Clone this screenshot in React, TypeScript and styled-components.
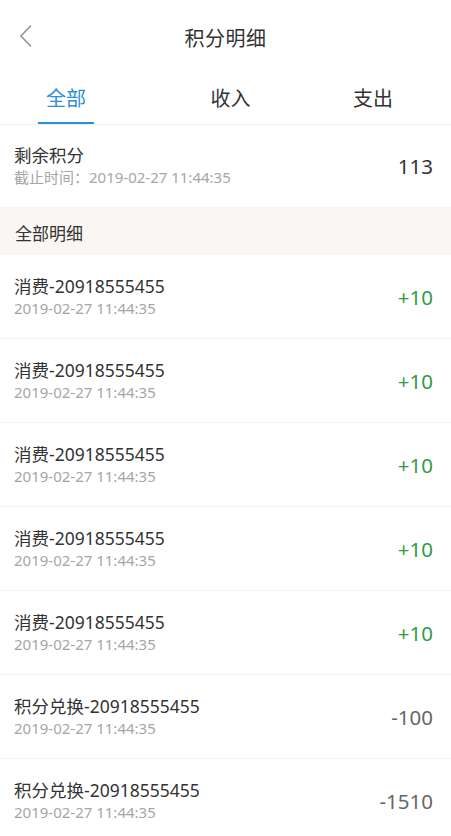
import React from "react";
import styled, { createGlobalStyle } from "styled-components";

const Global = createGlobalStyle`
  html, body { margin: 0; padding: 0; background: #fff; }
  body { font-family: "Noto Sans", "Noto Sans CJK SC", sans-serif; color: #333; }
  * { box-sizing: border-box; }
`;

const Page = styled.div`
  width: 451px;
  height: 836px;
  overflow: hidden;
  background: #fff;
`;

const Header = styled.div`
  position: relative;
  height: 75px;
  display: flex;
  align-items: center;
  justify-content: center;
`;

const Back = styled.button`
  position: absolute;
  left: 12px;
  top: 20px;
  width: 28px;
  height: 32px;
  border: none;
  background: none;
  padding: 0;
  display: flex;
  align-items: center;
  justify-content: center;
`;

const Title = styled.h1`
  margin: 0;
  font-size: 20px;
  font-weight: 400;
  color: #333;
  letter-spacing: 0.5px;
`;

const Tabs = styled.div`
  display: grid;
  grid-template-columns: 132px 197px 88px;
  height: 50px;
  border-bottom: 1px solid #f0f0f0;
`;

const Tab = styled.div<{ $active?: boolean }>`
  display: flex;
  justify-content: center;
  align-items: stretch;
  font-size: 20px;
  color: ${(p) => (p.$active ? "#2a8fd6" : "#333")};
  span {
    display: flex;
    align-items: center;
    padding: 0 8px 3px;
    border-bottom: 2px solid ${(p) => (p.$active ? "#2a8fd6" : "transparent")};
  }
`;

const Row = styled.div<{ $h?: number }>`
  display: flex;
  align-items: center;
  justify-content: space-between;
  height: ${(p) => p.$h ?? 84}px;
  padding: 0 18px 0 14px;
  border-bottom: 1px solid #f3f3f3;
`;

const Info = styled.div`
  display: flex;
  flex-direction: column;
`;

const Name = styled.div`
  font-size: 17.5px;
  line-height: 22px;
  color: #333;
`;

const Time = styled.div`
  font-size: 15px;
  line-height: 22px;
  color: #a6a6a6;
`;

const Amount = styled.div<{ $tone: "plus" | "minus" | "plain" }>`
  font-size: 20.5px;
  color: ${(p) => (p.$tone === "plus" ? "#2e9c45" : p.$tone === "minus" ? "#666" : "#333")};
`;

const Section = styled.div`
  height: 47px;
  background: #f9f6f3;
  display: flex;
  align-items: center;
  padding: 2px 15px 0;
  font-size: 17px;
  color: #333;
`;

const items = [
  { name: "消费-20918555455", amount: "+10" },
  { name: "消费-20918555455", amount: "+10" },
  { name: "消费-20918555455", amount: "+10" },
  { name: "消费-20918555455", amount: "+10" },
  { name: "消费-20918555455", amount: "+10" },
  { name: "积分兑换-20918555455", amount: "-100" },
  { name: "积分兑换-20918555455", amount: "-1510" },
];

export default function App() {
  return (
    <Page>
      <Global />
      <Header>
        <Back aria-label="back">
          <svg width="16" height="24" viewBox="0 0 16 24">
            <path d="M13 1.5 L3 12 L13 22.5" fill="none" stroke="#9a9a9a" strokeWidth="1.8" />
          </svg>
        </Back>
        <Title>积分明细</Title>
      </Header>
      <Tabs>
        <Tab $active><span>全部</span></Tab>
        <Tab><span>收入</span></Tab>
        <Tab><span>支出</span></Tab>
      </Tabs>
      <Row $h={83}>
        <Info>
          <Name>剩余积分</Name>
          <Time>截止时间：2019-02-27 11:44:35</Time>
        </Info>
        <Amount $tone="plain">113</Amount>
      </Row>
      <Section>全部明细</Section>
      {items.map((it, i) => (
        <Row key={i}>
          <Info>
            <Name>{it.name}</Name>
            <Time>2019-02-27 11:44:35</Time>
          </Info>
          <Amount $tone={it.amount.startsWith("+") ? "plus" : "minus"}>{it.amount}</Amount>
        </Row>
      ))}
    </Page>
  );
}
